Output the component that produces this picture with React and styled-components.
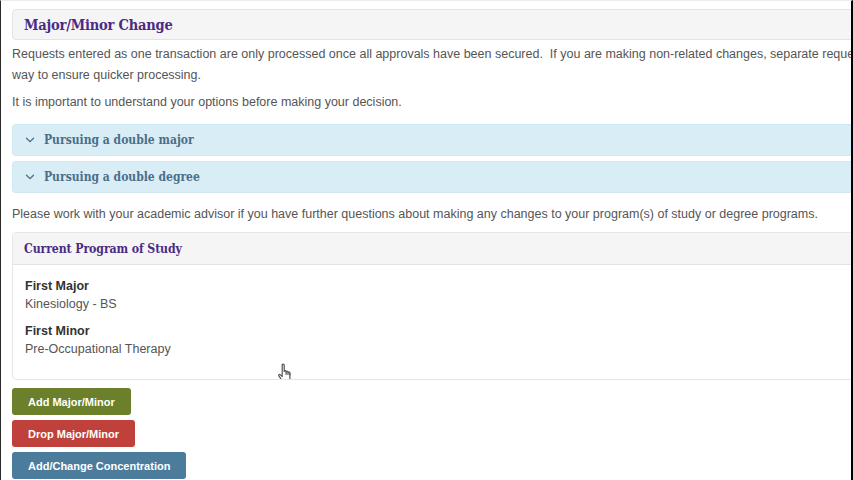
import React from 'react';
import styled, { createGlobalStyle } from 'styled-components';

const GlobalStyle = createGlobalStyle`
  html, body {
    margin: 0;
    padding: 0;
    background: #ffffff;
  }
  body {
    font-family: "Liberation Sans", Arial, sans-serif;
  }
`;

const Chevron = () => (
  <svg width="10" height="10" viewBox="0 0 10 10" fill="none">
    <path d="M1.5 3.2 L5 6.7 L8.5 3.2" stroke="#4a6f88" strokeWidth="1.3" strokeLinecap="round" />
  </svg>
);

const HandCursor = () => (
  <svg width="15" height="20" viewBox="0 0 15 20" fill="#ffffff" stroke="#555" strokeWidth="1.2" strokeLinejoin="round">
    <path d="M4.2 2c0-1.2 2-1.2 2 0v6.5c0-1.1 1.9-1.1 1.9 0v.6c0-1.1 1.9-1.1 1.9 0v.7c0-1.1 1.9-1.1 1.9 0V15c0 2.4-1.6 4.2-4 4.2H7.2c-1.4 0-2.4-.6-3.2-1.7L.9 12.8c-.6-.9.5-1.9 1.3-1.2l2 1.9z" />
    <path d="M8.1 9.1v2.6M10 9.8v2.2M11.9 10.5v1.7" fill="none" />
  </svg>
);

const App = () => {
  return (
    <>
      <GlobalStyle />
      <Frame>
        <Content>
          <TitlePanel>
            <PanelTitle>Major/Minor Change</PanelTitle>
          </TitlePanel>

          <Text>
            Requests entered as one transaction are only processed once all approvals have been secured.&nbsp; If you are making non-related changes, separate reque
            <br />
            way to ensure quicker processing.
          </Text>
          <Text>It is important to understand your options before making your decision.</Text>

          <Accordion>
            <AccordionHead>
              <Chevron />
              <AccordionTitle>Pursuing a double major</AccordionTitle>
            </AccordionHead>
            <AccordionHead>
              <Chevron />
              <AccordionTitle>Pursuing a double degree</AccordionTitle>
            </AccordionHead>
          </Accordion>

          <Text>
            Please work with your academic advisor if you have further questions about making any changes to your program(s) of study or degree programs.
          </Text>

          <Panel>
            <PanelHeader>
              <PanelTitle small>Current Program of Study</PanelTitle>
            </PanelHeader>
            <PanelBody>
              <Field>
                <Label>First Major</Label>
                <Value>Kinesiology - BS</Value>
              </Field>
              <Field>
                <Label>First Minor</Label>
                <Value>Pre-Occupational Therapy</Value>
              </Field>
              <Cursor>
                <HandCursor />
              </Cursor>
            </PanelBody>
          </Panel>

          <Buttons>
            <Button color="#6c7f2b">Add Major/Minor</Button>
            <Button color="#c0403b">Drop Major/Minor</Button>
            <Button color="#4b7c9c">Add/Change Concentration</Button>
          </Buttons>
        </Content>
      </Frame>
    </>
  );
};

export default App;

const Frame = styled.div`
  width: 853px;
  height: 480px;
  overflow: hidden;
  box-sizing: border-box;
  border-left: 1px solid #2a2a2a;
  border-right: 2px solid #000000;
  border-top: 1px solid #ececec;
`;

const Content = styled.div`
  width: 880px;
  padding: 8px 0 0 11px;
  box-sizing: border-box;
`;

const TitlePanel = styled.div`
  height: 31px;
  box-sizing: border-box;
  background: #f5f5f5;
  border: 1px solid #e3e3e3;
  border-radius: 4px;
  padding: 0 11px;
  display: flex;
  align-items: center;
  margin-bottom: 4px;
`;

const PanelTitle = styled.h2`
  margin: 0;
  font-family: "DejaVu Serif Condensed", "DejaVu Serif", serif;
  font-weight: 700;
  font-size: ${props => (props.small ? '12.2px' : '14.5px')};
  color: #4b2a85;
  letter-spacing: ${props => (props.small ? '-0.1px' : '-0.2px')};
`;

const Text = styled.p`
  margin: 0 0 6px;
  font-size: 12.5px;
  line-height: 21px;
  color: #555555;
  white-space: nowrap;
`;

const Accordion = styled.div`
  display: flex;
  flex-direction: column;
  gap: 5px;
  margin: 11px 0 11px;
`;

const AccordionHead = styled.div`
  height: 32px;
  box-sizing: border-box;
  background: #d9edf7;
  border: 1px dotted #c8e2ee;
  border-radius: 4px;
  padding: 0 0 0 12px;
  display: flex;
  align-items: center;
  gap: 9px;
`;

const AccordionTitle = styled.span`
  font-family: "DejaVu Serif Condensed", "DejaVu Serif", serif;
  font-weight: 700;
  font-size: 12px;
  color: #4a6f88;
`;

const Panel = styled.div`
  margin-top: 7px;
  border: 1px solid #e6e6e6;
  border-radius: 4px;
  overflow: hidden;
`;

const PanelHeader = styled.div`
  height: 32px;
  box-sizing: border-box;
  background: #f5f5f5;
  border-bottom: 1px solid #e3e3e3;
  padding: 0 11px;
  display: flex;
  align-items: center;
`;

const PanelBody = styled.div`
  position: relative;
  padding: 12px 12px 12px;
  height: 114px;
  box-sizing: border-box;
`;

const Field = styled.div`
  margin-bottom: 8px;
`;

const Label = styled.div`
  font-size: 12.5px;
  font-weight: 700;
  line-height: 18px;
  color: #333333;
`;

const Value = styled.div`
  font-size: 12.5px;
  line-height: 19px;
  color: #555555;
`;

const Cursor = styled.div`
  position: absolute;
  left: 265px;
  top: 98px;
`;

const Buttons = styled.div`
  display: flex;
  flex-direction: column;
  align-items: flex-start;
  gap: 5px;
  margin-top: 8px;
`;

const Button = styled.button`
  height: 27px;
  padding: 0 16px;
  border: none;
  border-radius: 3px;
  background: ${props => props.color};
  color: #ffffff;
  font-family: "Liberation Sans", Arial, sans-serif;
  font-weight: 700;
  font-size: 11px;
  cursor: pointer;
`;
